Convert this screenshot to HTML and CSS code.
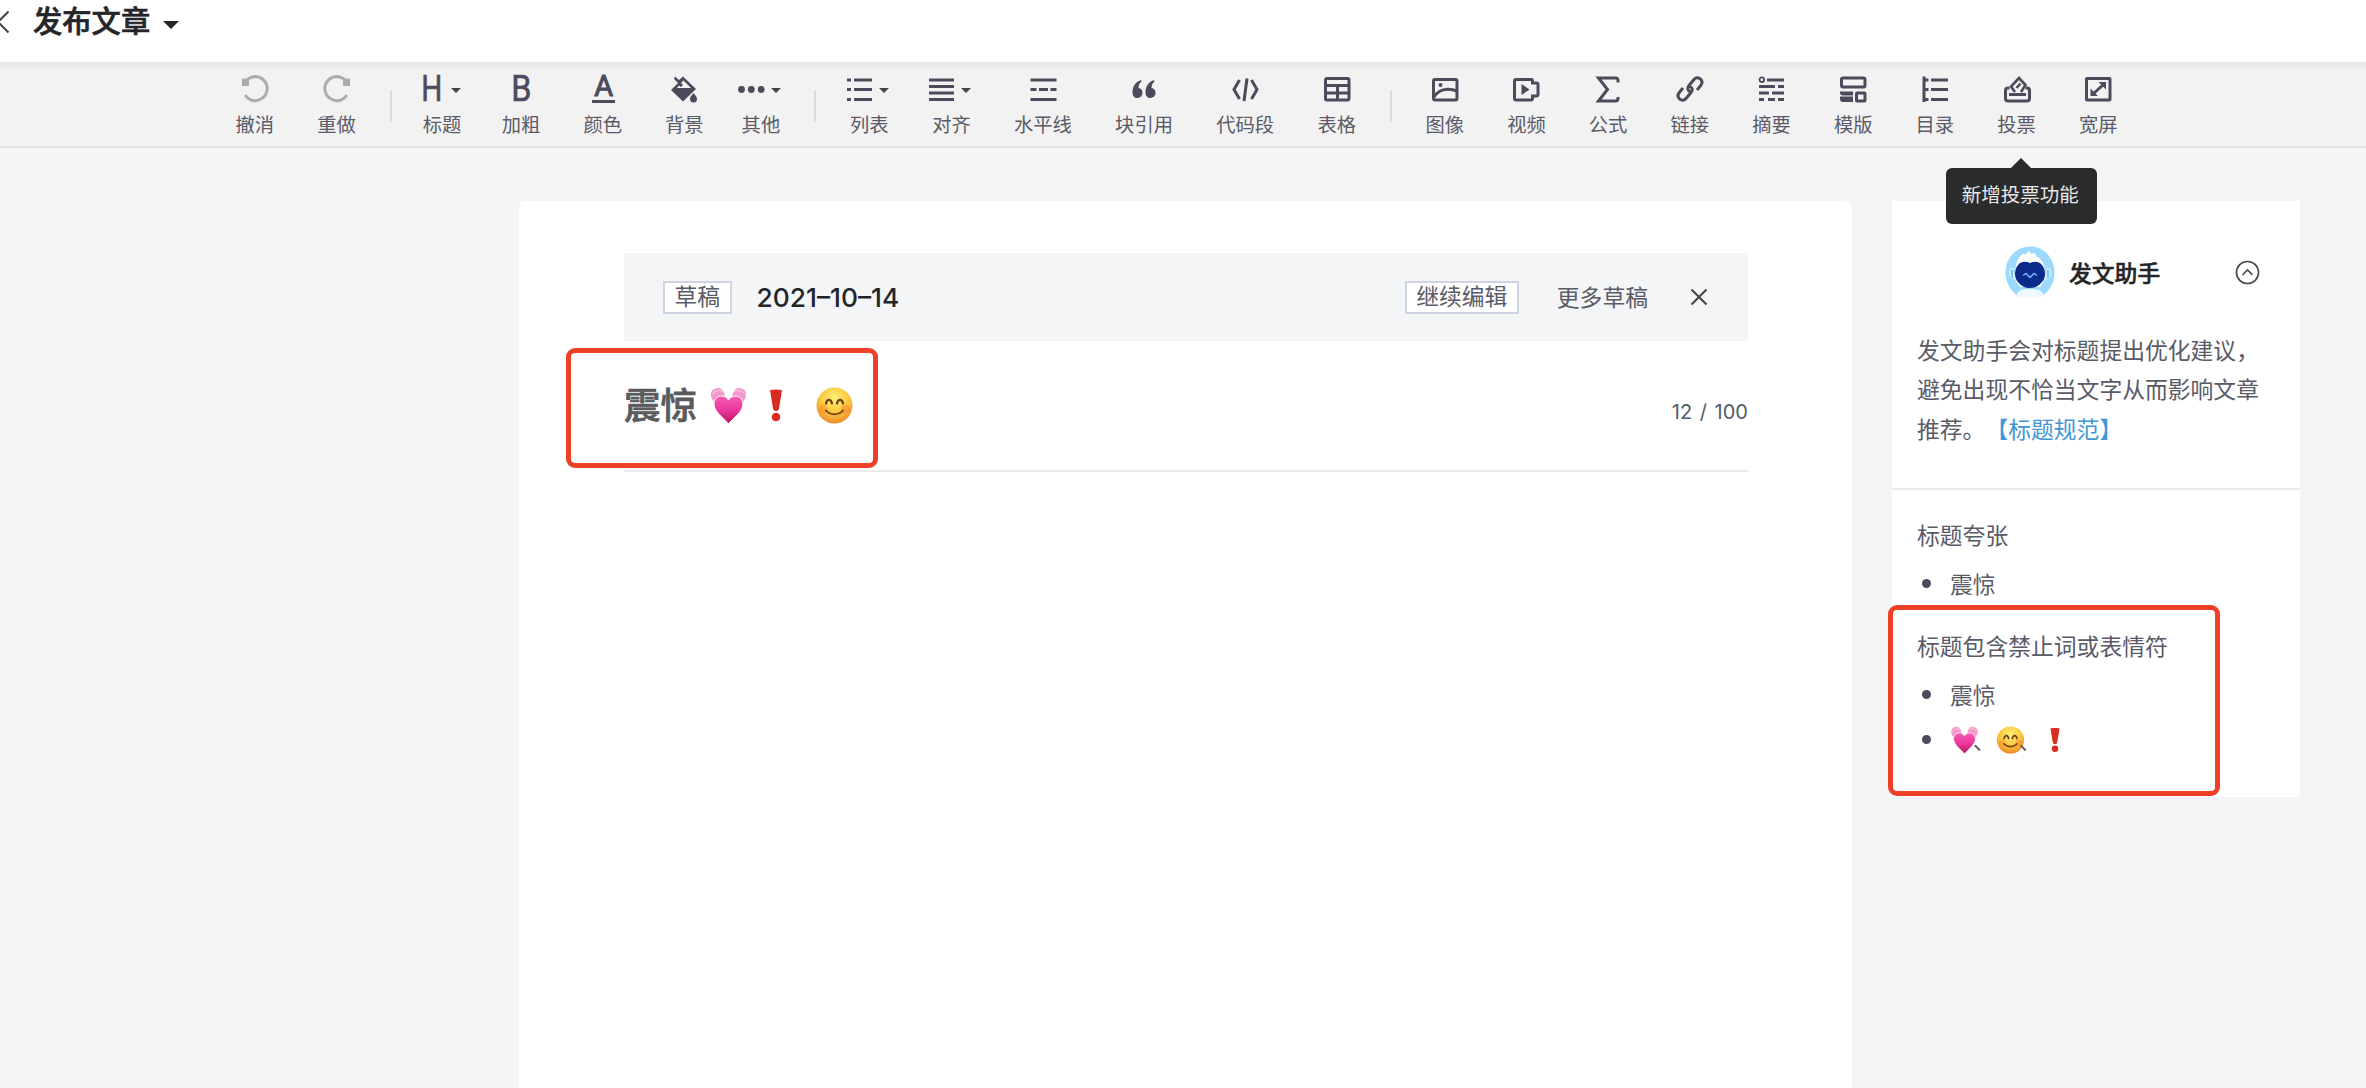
FILE: index.html
```
<!DOCTYPE html>
<html lang="zh-CN">
  <head>
    <meta charset="UTF-8" />
    <meta name="viewport" content="width=device-width, initial-scale=1.0" />
    <title>发布文章</title>
    <link rel="stylesheet" href="styles.css">
  </head>
  <body>
    <!-- shared emoji -->
    <svg class="defs" width="0" height="0">
      <defs>
        <linearGradient id="heartFill" x1="0" y1="0" x2="0" y2="1">
          <stop offset="0" stop-color="#f75cb4" />
          <stop offset="0.55" stop-color="#e8359a" />
          <stop offset="1" stop-color="#b81257" />
        </linearGradient>
        <radialGradient id="faceFill" cx="0.5" cy="0.3" r="0.7">
          <stop offset="0" stop-color="#fff07a" />
          <stop offset="0.55" stop-color="#fcc93f" />
          <stop offset="1" stop-color="#ee8a2c" />
        </radialGradient>
        <symbol id="heart" viewBox="0 0 37 37">
          <path d="M2 12C-1 6 2 1.500 8 1c3 0 5 2 6 5l1 4-9 6c-2-1-3-2-4-4zM35 12c3-6 0-10.500-6-11-3 0-5 2-6 5l-1 4 9 6c2-1 3-2 4-4z" fill="#f49aca" />
          <path d="M1.500 8C4 4 9 2 13 5M35.500 8C33 4 28 2 24 5" fill="none" stroke="#fbd0e6" stroke-width="1" />
          <path d="M18.500 37C14 31 4 25 4 17 4 9 14 6 18.500 13 23 6 33 9 33 17 33 25 23 31 18.500 37z" fill="url(#heartFill)" stroke="#fff" stroke-width="1" />
        </symbol>
        <symbol id="mark" viewBox="0 0 12 33">
          <path d="M0 1q6-1 12 0L9 19.500q-.3 2.500-3 2.500t-3-2.500z" fill="#da2b22" />
          <circle cx="6" cy="28" r="4.300" fill="#da2b22" />
        </symbol>
        <symbol id="face" viewBox="0 0 37 37">
          <circle cx="18.500" cy="18.500" r="18" fill="url(#faceFill)" />
          <circle cx="7.500" cy="22" r="4.500" fill="#f5762c" opacity=".35" />
          <circle cx="29.500" cy="22" r="4.500" fill="#f5762c" opacity=".35" />
          <path d="M10 16.500c1-5 5-5 6 0M21 16.500c1-5 5-5 6 0" fill="none" stroke="#6b3d12" stroke-width="2.200" stroke-linecap="round" />
          <path d="M10 23.500c4 5 13 5 17 0" fill="none" stroke="#7a4313" stroke-width="2" stroke-linecap="round" />
        </symbol>
      </defs>
    </svg>

    <header class="header">
      <svg class="back" width="12" height="26" viewBox="0 0 12 26"><path d="M8.500 2.500L-2 13l10.500 10.500" /></svg>
      <h1>发布文章</h1>
      <span class="title-caret"></span>
    </header>

    <nav class="toolbar">
      <div class="tool disabled">
        <div class="icon"><svg viewBox="0 0 28 28"><path d="M4.500 6.500A12 12 0 1 1 4 20" /><path class="fill" d="M1 3.500h2.500L8 5.500V11H1z" /></svg></div>
        <span>撤消</span>
      </div>
      <div class="tool disabled">
        <div class="icon"><svg viewBox="0 0 28 28"><path d="M23.500 6.500A12 12 0 1 0 24 20" /><path class="fill" d="M27 3.500h-2.500L20 5.500V11h7z" /></svg></div>
        <span>重做</span>
      </div>
      <i class="sep"></i>
      <div class="tool tool-heading">
        <div class="icon"><i class="letter">H</i><b class="caret"></b></div>
        <span>标题</span>
      </div>
      <div class="tool">
        <div class="icon"><i class="letter letter-bold">B</i></div>
        <span>加粗</span>
      </div>
      <div class="tool">
        <div class="icon"><i class="letter letter-color">A</i></div>
        <span>颜色</span>
      </div>
      <div class="tool">
        <div class="icon"><svg viewBox="0 0 28 28"><path class="fill" fill-rule="evenodd" d="M5 1.500L9 5l4-3.500L26 14 13 26.500 1 15 8 8 4 4zM8.500 13h12.500L13.500 5.500 11 8l2 2-2 2-2-1.500-2 2.500z" /><path class="fill" d="M23.500 18c2 2.500 3.500 4 3.500 6a3.400 3.400 0 0 1-7 0c0-2 1.500-3.500 3.500-6z" /></svg></div>
        <span>背景</span>
      </div>
      <div class="tool tool-more">
        <div class="icon"><svg viewBox="0 0 28 28"><g class="fill"><circle cx="4.500" cy="14.500" r="3.400" /><circle cx="14.300" cy="14.500" r="3.400" /><circle cx="24.200" cy="14.500" r="3.400" /></g></svg><b class="caret"></b></div>
        <span>其他</span>
      </div>
      <i class="sep"></i>
      <div class="tool tool-list">
        <div class="icon"><svg viewBox="0 0 28 28"><path d="M2 5h4M2 14.500h4M2 24.500h4M9 5h18M9 14.500h18M9 24.500h18" /></svg><b class="caret"></b></div>
        <span>列表</span>
      </div>
      <div class="tool tool-align">
        <div class="icon"><svg viewBox="0 0 28 28"><path d="M2 5h25M2 11.500h25M2 18h25M2 24.500h25" /></svg><b class="caret"></b></div>
        <span>对齐</span>
      </div>
      <div class="tool wide">
        <div class="icon"><svg viewBox="0 0 28 28"><path d="M1.500 5h26M1.500 14.500h6M10 14.500h9M21.500 14.500h6M1.500 24.500h26" /></svg></div>
        <span>水平线</span>
      </div>
      <div class="tool wide">
        <div class="icon"><svg viewBox="0 0 28 28"><path class="fill" d="M11 5C5 7 2.500 12 2.500 17.500 2.500 21 4.500 23 7.500 23a5 5 0 0 0 5-5c0-3-1.500-4.800-4-5 0-3 1-5 3-6.500zM24 5c-6 2-8.500 7-8.500 12.500 0 3.500 2 5.500 5 5.500a5 5 0 0 0 5-5c0-3-1.500-4.800-4-5 0-3 1-5 3-6.500z" /></svg></div>
        <span>块引用</span>
      </div>
      <div class="tool wide">
        <div class="icon"><svg viewBox="0 0 28 28"><path d="M8.500 5L3 14.500 8.500 24M20.500 5l5.500 9.500-5.500 9.500M16 3.500L13 26" /></svg></div>
        <span>代码段</span>
      </div>
      <div class="tool">
        <div class="icon"><svg viewBox="0 0 28 28"><rect x="2.500" y="3.500" width="23.500" height="21.500" rx="1.500" /><path d="M2.500 10.500h24M2.500 18h24M14.500 10.500v14" /></svg></div>
        <span>表格</span>
      </div>
      <i class="sep"></i>
      <div class="tool">
        <div class="icon"><svg viewBox="0 0 28 28"><rect x="2.500" y="4.500" width="23.500" height="20.500" rx="1.500" /><path d="M3 22c4-7 13-10 23-6" /><circle class="fill" cx="9.500" cy="10" r="2" /></svg></div>
        <span>图像</span>
      </div>
      <div class="tool">
        <div class="icon"><svg viewBox="0 0 28 28"><path d="M20.500 8V6q0-1.500-1.500-1.500H4Q2.500 4.500 2.500 6v17.500Q2.500 25 4 25h15q1.500 0 1.500-1.500V21h4q1.500 0 1.500-1.500v-10Q26 8 24.500 8z" /><path class="fill" d="M9.500 9l8 5.500-8 5.500z" /></svg></div>
        <span>视频</span>
      </div>
      <div class="tool">
        <div class="icon"><svg viewBox="0 0 28 28"><path d="M24 7.500V5.500q0-2.500-2.500-2.500H4.500L13.500 14.500 4.500 26h17q2.500 0 2.500-2.500V22" /></svg></div>
        <span>公式</span>
      </div>
      <div class="tool">
        <div class="icon"><svg viewBox="0 0 28 28"><path d="M14.500 17c-3-1.500-3.500-4-1.500-6.500l5-6c2-2.300 4.700-2 6.500-.300s1.900 4.300 0 6.600l-3.500 4.200M13.500 11c3 1.500 3.500 4 1.500 6.500l-5 6c-2 2.300-4.700 2-6.500.300s-1.900-4.300 0-6.600L7 13" /></svg></div>
        <span>链接</span>
      </div>
      <div class="tool">
        <div class="icon"><svg viewBox="0 0 28 28"><circle cx="4.800" cy="4.700" r="2.300" stroke-width="1.800" /><path d="M10 5h17M2 11.500h16M21 11.500h6M2 18h10M15 18h12M2 24.500h5M11 24.500h7M21 24.500h6" /></svg></div>
        <span>摘要</span>
      </div>
      <div class="tool">
        <div class="icon"><svg viewBox="0 0 28 28"><rect x="2.500" y="3" width="23.500" height="9" rx="1.500" /><path class="fill" d="M1 16.500h13v4H4q-3 0-3-3zM1 21.500h13V27H4q-3 0-3-3z" /><rect x="17.500" y="18" width="8.500" height="8" rx=".5" /></svg></div>
        <span>模版</span>
      </div>
      <div class="tool">
        <div class="icon"><svg viewBox="0 0 28 28"><path d="M3 1.500V27M3 5h4.500M3 14.500h4.500M3 24.500h4.500M10 5h17M10 14.500h17M10 24.500h17" /></svg></div>
        <span>目录</span>
      </div>
      <div class="tool tool-vote">
        <div class="icon"><svg viewBox="0 0 28 28"><path d="M6.500 13H5q-2.500 0-2.500 2.500v8Q2.500 26 5 26h19q2.500 0 2.500-2.500v-8Q26.500 13 24 13h-1.500M6 19.500h17" /><path d="M12 17L8 11.500l8-8.500 6.500 7L18 17M13.500 13l4-4.500" stroke-width="2.600" /></svg></div>
        <span>投票</span>
        <div class="tooltip">新增投票功能</div>
      </div>
      <div class="tool">
        <div class="icon"><svg viewBox="0 0 28 28"><rect x="2.500" y="3.500" width="23.500" height="21.500" rx=".5" /><path d="M9 19L19.500 9.500" /><path class="fill" d="M14.500 7h7.500v7.500zM6.500 13.500l7.500 7.500H6.500z" /></svg></div>
        <span>宽屏</span>
      </div>
    </nav>

    <main class="content">
      <section class="editor">
        <div class="draft">
          <span class="tag">草稿</span>
          <strong class="date">2021–10–14</strong>
          <a class="tag continue">继续编辑</a>
          <a class="more">更多草稿</a>
          <svg class="close" width="18" height="18" viewBox="0 0 18 18"><path d="M1.500 1.500l15 15M16.500 1.500l-15 15" /></svg>
        </div>
        <div class="title-row">
          <div class="title">
            <span>震惊</span>
            <svg class="title-heart"><use href="#heart" /></svg>
            <svg class="title-mark"><use href="#mark" /></svg>
            <svg class="title-face"><use href="#face" /></svg>
          </div>
          <span class="count">12 / 100</span>
          <div class="frame frame-title"></div>
        </div>
      </section>

      <aside class="assistant">
        <div class="assistant-head">
          <svg class="avatar" viewBox="0 0 50 52">
            <path d="M25 .5c14 0 24.500 12 24.500 26 0 11-6 20-14 24.500h-21C6.500 46.500.5 37.500.5 26.500.5 12.500 11 .5 25 .5z" fill="#9bdafc" />
            <path d="M11 20c1-7 4-10 8-13l1 2 4-4 2 3 4-1 1 3c4 2 7 5 8 10l2 12-6 9H15l-6-9z" fill="#fff" />
            <path d="M12 51c-1-6 4-8 13-8s14 2 13 8z" fill="#eefaff" />
            <path d="M5 22q-3 6 1 11l3 0V22zM45 22q3 6-1 11h-3V22z" fill="#c7ebff" />
            <path d="M7 24v8M43 24v8" stroke="#5fb8f2" stroke-width="1.500" />
            <path d="M25 17c4-2 9-2 12 2 4 5 4 13 0 17-3 4-7 6-12 6s-9-2-12-6c-4-4-4-12 0-17 3-4 8-4 12-2z" fill="#0b2a8c" />
            <path d="M18 29.500l3-2 4 4 4-4 3 2" fill="none" stroke="#7db5ff" stroke-width="1.400" />
          </svg>
          <h2>发文助手</h2>
          <svg class="collapse" width="25" height="25" viewBox="0 0 25 25"><circle cx="12.500" cy="12.500" r="11" /><path d="M7.500 15l5-5 5 5" /></svg>
        </div>
        <p class="intro">发文助手会对标题提出优化建议，<br>避免出现不恰当文字从而影响文章<br>推荐。<a>【标题规范】</a></p>
        <div class="result">
          <h3>标题夸张</h3>
          <ul>
            <li>震惊</li>
          </ul>
          <h3>标题包含禁止词或表情符</h3>
          <ul>
            <li>震惊</li>
            <li><svg class="emoji"><use href="#heart" width="29" height="28" /></svg>、<svg class="emoji"><use href="#face" width="29" height="28" /></svg>、<svg class="emoji"><use href="#mark" x="9" y="1.500" width="10" height="25" /></svg></li>
          </ul>
        </div>
        <div class="frame frame-result"></div>
      </aside>
    </main>
  </body>
</html>
```
FILE: styles.css
```
:root {
  --text-color: #5a5a68;
  --icon-color: #4b4b5b;
  --dark-color: #242528;
  --background-color: #f3f5f7;
  --frame-color: #ee3f27;
}

* {
  box-sizing: border-box;
  margin: 0;
  padding: 0;
}

body {
  height: 1088px;
  overflow: hidden;
  font-family: Inter, "Noto Sans CJK SC", sans-serif;
  font-size: 22.8px;
  text-spacing-trim: space-all;
  color: var(--text-color);
  background-color: var(--background-color);
}

.defs {
  position: absolute;
}

svg {
  display: block;
  flex: none;
}

/* header */
.header {
  display: flex;
  align-items: center;
  height: 62px;
  padding-bottom: 18px;
  background-color: #fff;
}

.header h1 {
  margin-left: 21px;
  font-size: 29.3px;
  font-weight: 500;
  line-height: 44px;
  color: var(--dark-color);
  -webkit-text-stroke: 0.6px var(--dark-color);
}

.back path {
  fill: none;
  stroke: #444;
  stroke-width: 2;
}

.title-caret {
  margin: 6px 0 0 13px;
  border: 8px solid transparent;
  border-top-color: var(--dark-color);
  border-bottom: 0;
}

/* toolbar */
.toolbar {
  display: flex;
  height: 86px;
  padding-left: 214px;
  background: linear-gradient(#e7e7e7, #f2f2f2 9px);
  border-bottom: 2px solid #e4e5e7;
}

.tool {
  position: relative;
  display: flex;
  flex-direction: column;
  align-items: center;
  flex: none;
  width: 81.7px;
  padding-top: 13px;
  font-size: 19.3px;
  line-height: 28px;
}

.tool > span {
  margin-top: 8px;
}

.tool.wide {
  width: 101.2px;
}

.tool-heading {
  width: 76.4px;
}

.tool-more {
  width: 76.4px;
  padding-right: 5px;
}

.tool-list {
  width: 82.6px;
}

.tool-more .icon,
.tool-list .icon,
.tool-align .icon {
  margin-left: -4px;
}

.icon {
  display: flex;
  align-items: center;
  height: 28px;
}

.icon svg {
  width: 28px;
  height: 28px;
  fill: none;
  stroke: var(--icon-color);
  stroke-width: 3;
}

.icon .fill {
  fill: var(--icon-color);
  stroke: none;
}

.letter {
  width: 20px;
  font: 400 36px/28px Roboto, sans-serif;
  text-indent: -3px;
  color: var(--icon-color);
  -webkit-text-stroke: 0.6px var(--icon-color);
  transform: scaleX(0.82);
}

.letter-bold {
  transform: translateX(2px) scaleX(0.9);
}

.letter-color {
  width: 23px;
  height: 28px;
  border-bottom: 3px solid var(--icon-color);
  font-size: 29px;
  line-height: 23px;
  text-align: center;
  text-indent: 0;
  -webkit-text-stroke-width: 1px;
  transform: translateX(1px);
}

.disabled .icon {
  opacity: 0.42;
}

.caret {
  margin: 2px 0 0 6px;
  border: 5px solid transparent;
  border-top-color: #444;
  border-bottom: 0;
}

.tool-heading .caret {
  margin-left: 9px;
}

.sep {
  flex: none;
  width: 2px;
  height: 30px;
  margin: 29px 12.2px 0;
  background-color: #d9d9dc;
}

.tooltip {
  position: absolute;
  top: 106px;
  left: -30px;
  z-index: 2;
  width: 151px;
  height: 56px;
  padding-right: 2px;
  border-radius: 6px;
  font-size: 19.5px;
  line-height: 54px;
  text-align: center;
  white-space: nowrap;
  color: #e8e8e8;
  background-color: #2a2b2d;
}

.tooltip::before {
  content: "";
  position: absolute;
  top: -10px;
  left: 65px;
  border: 10px solid transparent;
  border-top: 0;
  border-bottom-color: #2a2b2d;
}

/* editor */
.content {
  display: flex;
  align-items: flex-start;
  gap: 40px;
  padding: 53px 66px 0 519px;
}

.editor {
  width: 1333px;
  height: 887px;
  padding: 52px 104px 0 105px;
  border-radius: 6px 6px 0 0;
  background-color: #fff;
}

.draft {
  display: flex;
  align-items: center;
  height: 88px;
  padding: 0 40px 0 39px;
  background-color: var(--background-color);
}

.tag {
  height: 33px;
  padding: 0 9.5px;
  border: 2px solid #d0d3e4;
  line-height: 28px;
  background-color: #fff;
}

.date {
  margin-left: 25px;
  font-size: 26.3px;
  font-weight: 500;
  color: var(--dark-color);
}

.continue {
  margin-left: auto;
}

.more {
  margin: -2px 42px 0 38px;
}

.close path {
  fill: none;
  stroke: #444;
  stroke-width: 2;
}

.title-row {
  position: relative;
  display: flex;
  align-items: center;
  justify-content: space-between;
  height: 131px;
  border-bottom: 2px solid #ebebeb;
}

.title {
  display: flex;
  align-items: center;
  font-size: 36.6px;
  font-weight: 500;
  line-height: 54px;
  color: #5a5b5e;
  -webkit-text-stroke: 0.7px #5a5b5e;
}

.title svg {
  -webkit-text-stroke: 0;
}

.title-heart,
.title-face {
  width: 37px;
  height: 37px;
}

.title-heart {
  margin-left: 13px;
}

.title-mark {
  width: 12px;
  height: 33px;
  margin: 0 34px 0 23px;
}

.count {
  margin-top: 13px;
  font-size: 20px;
  word-spacing: 2px;
  color: #4f5b69;
}

.frame {
  position: absolute;
  border: 5px solid var(--frame-color);
  border-radius: 9px;
}

.frame-title {
  top: 7px;
  left: -58px;
  width: 312px;
  height: 120px;
}

/* assistant */
.assistant {
  position: relative;
  width: 408px;
  height: 596px;
  background-color: #fff;
}

.assistant-head {
  display: flex;
  align-items: center;
  height: 97px;
  padding: 45px 40px 0 113px;
}

.avatar {
  width: 50px;
  height: 52px;
}

.assistant h2 {
  margin-left: 14px;
  font-size: 22.8px;
  font-weight: 500;
  color: var(--dark-color);
  -webkit-text-stroke: 0.5px var(--dark-color);
}

.collapse {
  margin-left: auto;
  fill: none;
  stroke: #4a4a4a;
  stroke-width: 1.7;
}

.intro {
  height: 192px;
  padding: 33px 0 0 25px;
  border-bottom: 2px solid #ebebeb;
  line-height: 39.3px;
  white-space: nowrap;
}

.intro a {
  color: #3f97d8;
}

.result {
  padding: 26px 0 0 25px;
}

.result h3 {
  font-size: 22.8px;
  font-weight: 400;
  line-height: 40px;
}

.result ul {
  margin-bottom: 21px;
  padding-top: 5px;
  list-style: none;
}

.result li {
  display: flex;
  align-items: center;
  height: 45px;
  white-space: nowrap;
}

.result li::before {
  content: "";
  width: 9px;
  height: 9px;
  margin: 0 19px 0 5px;
  border-radius: 50%;
  background-color: var(--icon-color);
}

.emoji {
  width: 22.8px;
  height: 28px;
  overflow: visible;
}

.frame-result {
  top: 404px;
  left: -4px;
  width: 332px;
  height: 191px;
}
```
